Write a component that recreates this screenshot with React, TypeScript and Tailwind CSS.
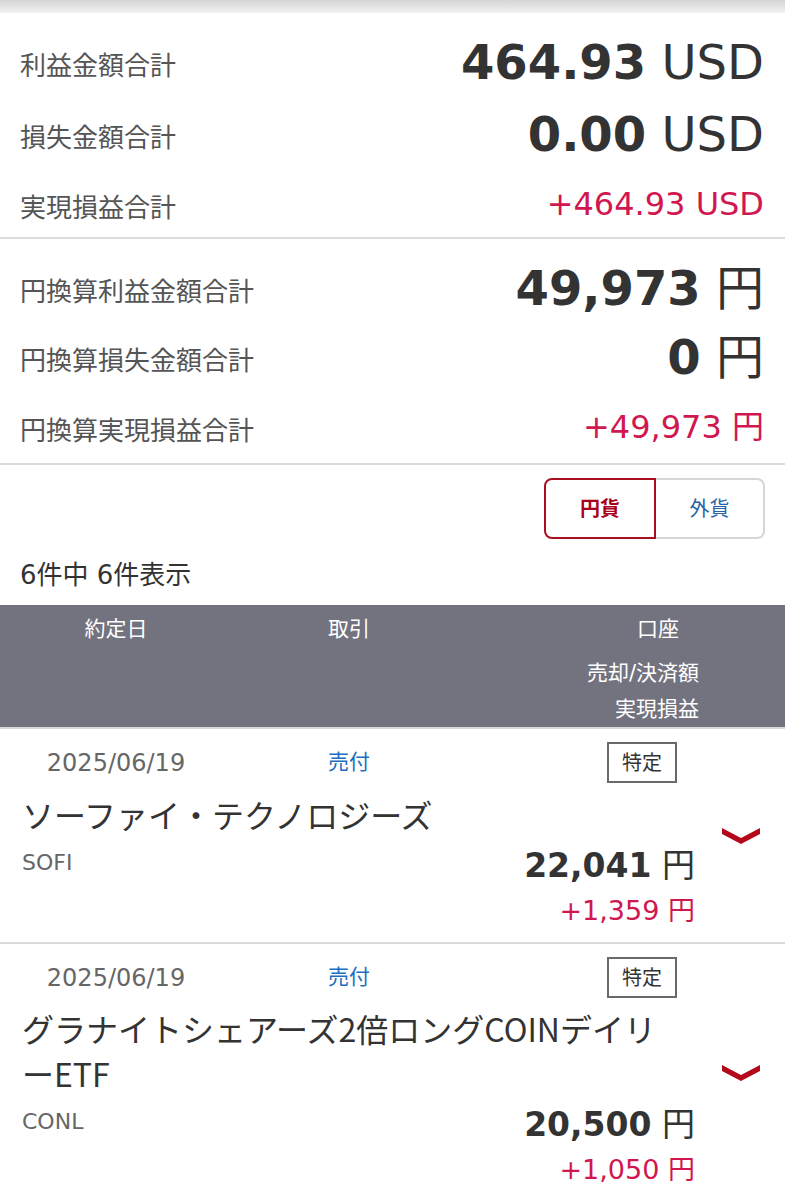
import React from "react";

function Chevron() {
  return (
    <svg width="38" height="16" viewBox="0 0 38 16" aria-hidden="true">
      <polygon points="0,0 19,10 38,0 38,6 19,16 0,6" fill="#b3091b" />
    </svg>
  );
}

type TradeProps = {
  name: string;
  ticker: string;
  amount: string;
  pl: string;
  nameMt: string;
};

function TradeRow({ name, ticker, amount, pl, nameMt }: TradeProps) {
  return (
    <div className="flex border-b-2 border-[#dadada]">
      <div className="w-[697px] pt-[13px] pb-[13px]">
        <div className="grid h-[41px] grid-cols-[232px_234px_1fr] items-center">
          <span className="text-center text-[24px] leading-none text-[#666]">2025/06/19</span>
          <span className="text-center text-[21px] leading-none text-[#1b6ec2]">売付</span>
          <div className="flex justify-end pr-[20px]">
            <span className="flex h-[41px] w-[70px] items-center justify-center border-2 border-[#6a6a6a] text-[20px] text-[#333]">
              特定
            </span>
          </div>
        </div>
        <div
          className={`${nameMt} w-[680px] pl-[22px] font-['Noto_Sans_CJK_JP',sans-serif] text-[32px] leading-[45px] text-[#333] [line-break:loose]`}
        >
          {name}
        </div>
        <div className="mt-[9px] flex items-start justify-between pl-[22px] pr-[2px]">
          <span className="pt-[3px] text-[22px] leading-[28px] text-[#666]">{ticker}</span>
          <div className="flex flex-col items-end">
            <span className="text-[33px] leading-[40px] text-[#333]">
              <span className="font-bold">{amount}</span> 円
            </span>
            <span className="mt-[7px] text-[27px] leading-[36px] text-[#d0174f]">{pl} 円</span>
          </div>
        </div>
      </div>
      <div className="flex flex-1 items-center justify-center">
        <Chevron />
      </div>
    </div>
  );
}

type SumProps = {
  label: string;
  h: string;
  children: React.ReactNode;
};

function SumRow({ label, h, children }: SumProps) {
  return (
    <div className={`flex ${h} items-center justify-between pl-5 pr-[21px]`}>
      <span className="pt-2 text-[26px] leading-none text-[#555]">{label}</span>
      {children}
    </div>
  );
}

export default function App() {
  return (
    <div
      lang="ja"
      className="w-[785px] bg-white font-['DejaVu_Sans','Noto_Sans_CJK_JP',sans-serif]"
    >
      <div className="h-[13px] bg-linear-to-b from-[#d4d4d4] to-[#f3f3f3]" />

      {/* USD totals */}
      <section className="border-b-2 border-[#dcdcdc] pt-[14px]">
        <SumRow label="利益金額合計" h="h-[70px]">
          <span className="text-[48px] leading-[46px] text-[#333]">
            <span className="font-bold">464.93</span> USD
          </span>
        </SumRow>
        <SumRow label="損失金額合計" h="h-[73px]">
          <span className="text-[48px] leading-[46px] text-[#333]">
            <span className="font-bold">0.00</span> USD
          </span>
        </SumRow>
        <SumRow label="実現損益合計" h="h-[67px]">
          <span className="text-[32px] leading-none text-[#d0174f]">+464.93 USD</span>
        </SumRow>
      </section>

      {/* JPY totals */}
      <section className="border-b-2 border-[#dcdcdc] pt-[14px]">
        <SumRow label="円換算利益金額合計" h="h-[70px]">
          <span className="text-[48px] leading-[46px] text-[#333]">
            <span className="font-bold">49,973</span> 円
          </span>
        </SumRow>
        <SumRow label="円換算損失金額合計" h="h-[68px]">
          <span className="text-[48px] leading-[46px] text-[#333]">
            <span className="font-bold">0</span> 円
          </span>
        </SumRow>
        <SumRow label="円換算実現損益合計" h="h-[72px]">
          <span className="text-[32px] leading-none text-[#d0174f]">+49,973 円</span>
        </SumRow>
      </section>

      {/* toggle */}
      <div className="flex justify-end pr-5 pt-[13px]">
        <div className="flex h-[61px]">
          <div className="flex w-[112px] items-center justify-center rounded-l-[8px] border-2 border-[#a8101f] text-[20px] font-bold text-[#a8001c]">
            円貨
          </div>
          <div className="flex w-[109px] items-center justify-center rounded-r-[8px] border-2 border-l-0 border-[#d6d6d6] text-[20px] text-[#2863a8]">
            外貨
          </div>
        </div>
      </div>

      <div className="mt-[18px] pl-5 text-[26px] leading-[36px] text-[#333]">6件中 6件表示</div>

      {/* table header */}
      <div className="mt-[12px] border-b-2 border-[#d9d9d9] bg-[#72737f] pt-[6px] text-[21px] leading-[36px] text-white">
        <div className="grid grid-cols-[232px_234px_1fr]">
          <span className="text-center">約定日</span>
          <span className="text-center">取引</span>
          <span className="pr-[106px] text-right">口座</span>
        </div>
        <div className="mt-[8px] pr-[86px] text-right">売却/決済額</div>
        <div className="pr-[86px] text-right">実現損益</div>
      </div>

      <TradeRow
        name="ソーファイ・テクノロジーズ"
        ticker="SOFI"
        amount="22,041"
        pl="+1,359"
        nameMt="mt-[9px]"
      />
      <TradeRow
        name="グラナイトシェアーズ2倍ロングCOINデイリーETF"
        ticker="CONL"
        amount="20,500"
        pl="+1,050"
        nameMt="mt-[8px]"
      />
    </div>
  );
}
